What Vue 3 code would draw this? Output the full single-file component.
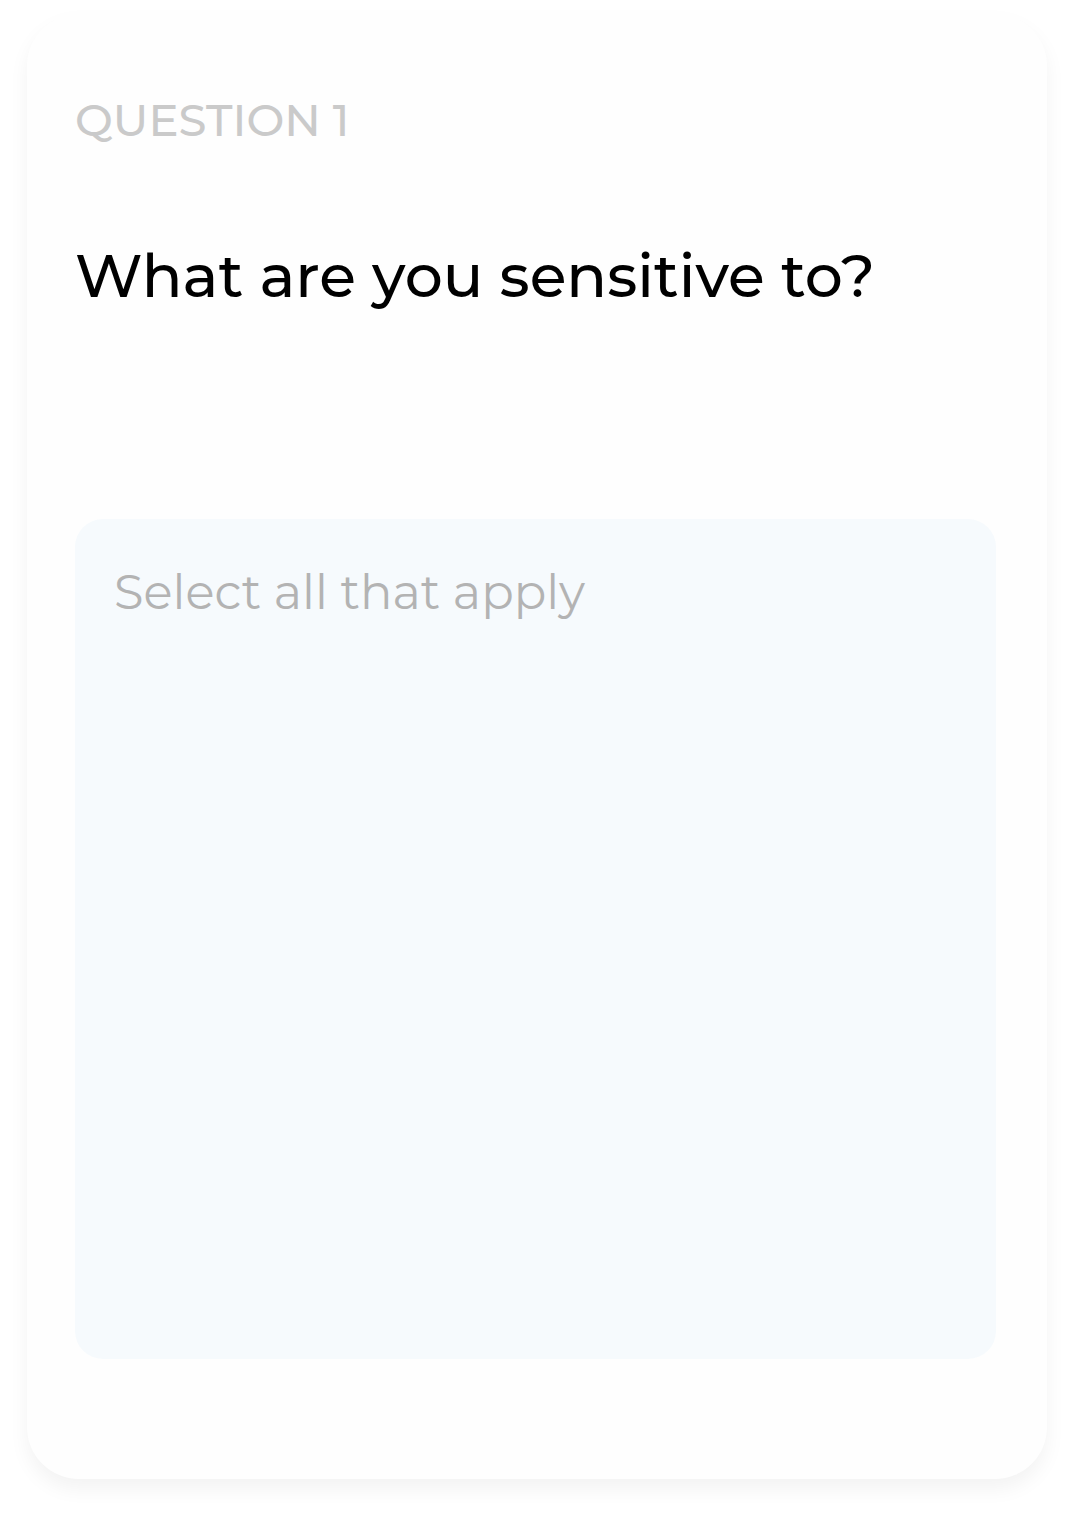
<script setup>
import { ref } from 'vue'

const answer = ref('')
</script>

<template>
  <main class="page">
    <section class="card">
      <p class="eyebrow">QUESTION 1</p>
      <h1 class="title"><label for="answer">What are you sensitive to?</label></h1>
      <textarea id="answer" v-model="answer" class="answer" placeholder="Select all that apply"></textarea>
    </section>
  </main>
</template>

<style>
body {
  margin: 0;
  background: #fff;
}
</style>

<style scoped>
.page {
  box-sizing: border-box;
  min-height: 100vh;
  padding: 14px 27px 36px;
  font-family: Montserrat, Inter, "Open Sans", sans-serif;
}

.card {
  box-sizing: border-box;
  display: flex;
  flex-direction: column;
  padding: 78px 51px 120px 48px;
  border-radius: 52px;
  background: #fefefe;
  box-shadow: 0 10px 20px rgba(0, 0, 0, 0.05);
}

.eyebrow {
  margin: 0;
  font-size: 45px;
  line-height: 56px;
  font-weight: 500;
  color: #cacaca;
}

.title {
  margin: 88px 0 0;
  font-size: 60px;
  line-height: 80px;
  font-weight: 500;
  color: #000;
}

.answer {
  box-sizing: border-box;
  display: block;
  width: 100%;
  height: 840px;
  margin: 203px 0 0;
  padding: 43px 39px;
  border: 0;
  border-radius: 28px;
  outline: 0;
  resize: none;
  background: #f6fafd;
  color: #333;
  font-family: inherit;
  font-size: 48px;
  line-height: 60px;
}

.answer::placeholder {
  color: #b3b3b3;
  opacity: 1;
}
</style>
